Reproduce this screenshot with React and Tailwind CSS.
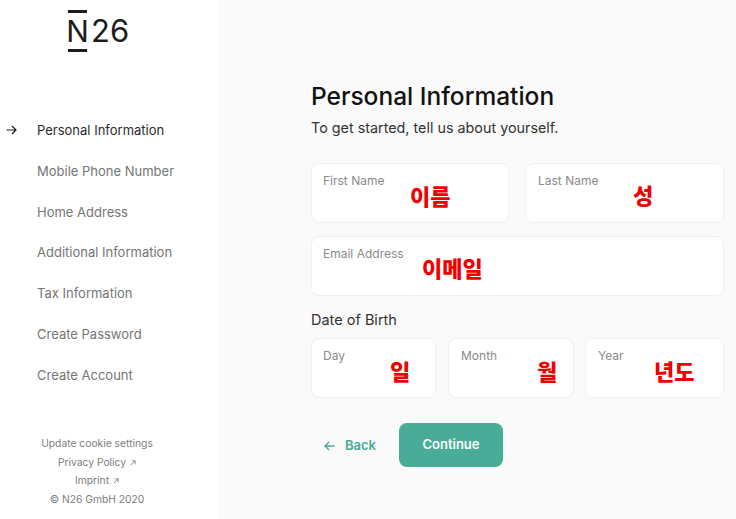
const font = "font-['Inter',sans-serif]";

const steps = [
  "Personal Information",
  "Mobile Phone Number",
  "Home Address",
  "Additional Information",
  "Tax Information",
  "Create Password",
  "Create Account",
];

function Field({ label, note, noteClass, labelClass = "left-[11px]", className = "" }) {
  return (
    <div className={`relative h-[60px] rounded-lg border border-[#f0f0f0] bg-white ${className}`}>
      <span className={`absolute top-[9px] text-[12px] leading-[16px] text-[#8a8a8a] ${labelClass}`}>{label}</span>
      <span
        className={`absolute font-['Noto_Sans_CJK_KR',sans-serif] text-[22px] leading-[30px] font-black text-[#f00000] ${noteClass}`}
      >
        {note}
      </span>
    </div>
  );
}

function SmallArrow() {
  return (
    <svg width="6" height="6" viewBox="0 0 7 7" fill="none" stroke="#7d7d7d" strokeWidth="1" className="ml-1 inline-block">
      <path d="M1 6L6 1M2 1h4v4" />
    </svg>
  );
}

export default function App() {
  return (
    <div className={`flex h-[519px] w-[736px] overflow-hidden bg-[#fafafa] ${font}`}>
      <aside className="flex w-[218px] shrink-0 flex-col bg-white">
        <div className="flex h-[110px] items-start pl-[68px] pt-[10px]">
          <div className="flex w-[19px] flex-col items-center">
            <div className="h-[3px] w-[19px] shrink-0 bg-[#1c1c1c]" />
            <span className="text-[30px] leading-[36px] text-[#1c1c1c]">N</span>
            <div className="h-[3px] w-[19px] shrink-0 bg-[#1c1c1c]" />
          </div>
          <span className="ml-[4px] mt-[3px] text-[31px] leading-[36px] text-[#1c1c1c]">26</span>
        </div>
        <nav className="flex flex-col pt-[0.3px]">
          {steps.map((step, i) => (
            <div key={step} className="relative flex h-[40.8px] items-center pl-[37px]">
              {i === 0 && (
                <svg width="11" height="10" viewBox="0 0 11 10" fill="none" stroke="#1c1c1c" strokeWidth="1.2" className="absolute left-[6px] top-[15px]">
                  <path d="M0.5 5h9.5M6 1l4 4-4 4" />
                </svg>
              )}
              <span className={`text-[13px] ${i === 0 ? "text-[#2b2b2b]" : "text-[#757575]"}`}>{step}</span>
            </div>
          ))}
        </nav>
        <footer className="mt-[38px] flex flex-col items-center pr-[24px] text-[10.3px] leading-[18.7px] text-[#7d7d7d]">
          <span>Update cookie settings</span>
          <span>Privacy Policy<SmallArrow /></span>
          <span>Imprint<SmallArrow /></span>
          <span>© N26 GmbH 2020</span>
        </footer>
      </aside>
      <main className="flex-1 pl-[93px] pr-[12px] pt-[79px]">
        <h1 className="text-[24.5px] leading-[34px] font-medium text-[#111111]">Personal Information</h1>
        <p className="mt-[5px] text-[14.35px] leading-[20px] text-[#333333]">To get started, tell us about yourself.</p>
        <div className="mt-[25px] flex gap-[16px]">
          <Field className="w-[198px]" label="First Name" note="이름" noteClass="left-[98px] top-[16px]" />
          <Field className="flex-1" labelClass="left-[12px]" label="Last Name" note="성" noteClass="left-[107px] top-[15px]" />
        </div>
        <Field className="mt-[13px]" label="Email Address" note="이메일" noteClass="left-[110px] top-[15px]" />
        <h2 className="mt-[14px] text-[14.5px] leading-[20px] text-[#333333]">Date of Birth</h2>
        <div className="mt-[8px] flex gap-[12px]">
          <Field className="w-[125px]" label="Day" note="일" noteClass="left-[78px] top-[16px]" />
          <Field className="w-[126px]" labelClass="left-[12px]" label="Month" note="월" noteClass="left-[88px] top-[16px]" />
          <Field className="-ml-px flex-1" labelClass="left-[12px]" label="Year" note="년도" noteClass="left-[68px] top-[16px]" />
        </div>
        <div className="mt-[25px] flex items-center">
          <button className="mt-[2px] flex w-[88px] items-center pl-[13px] text-[13px] font-semibold text-[#48ac98]">
            <svg width="11" height="10" viewBox="0 0 11 10" fill="none" stroke="#48ac98" strokeWidth="1.4" className="mr-[10px]">
              <path d="M10.5 5H1M5 1L1 5l4 4" />
            </svg>
            Back
          </button>
          <button className="h-[44px] w-[104px] rounded-lg bg-[#48ac98] text-[13px] font-semibold text-white">Continue</button>
        </div>
      </main>
    </div>
  );
}
